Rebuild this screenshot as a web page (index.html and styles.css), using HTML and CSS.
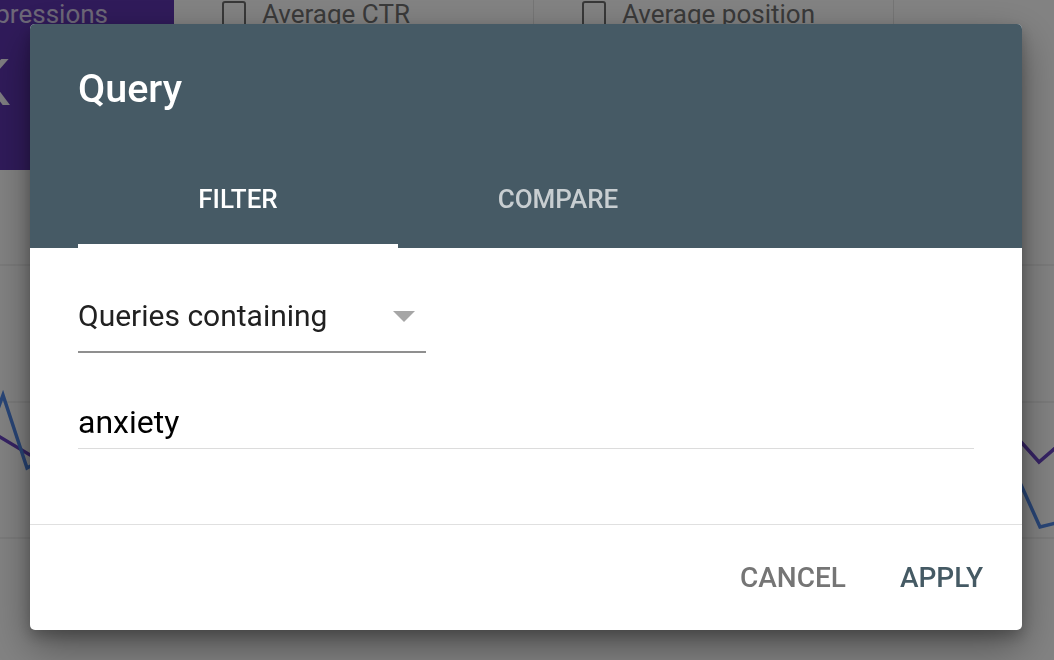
FILE: index.html
```html
<!DOCTYPE html>
<html lang="en">
<head>
<meta charset="utf-8">
<title>Query filter</title>
<link rel="stylesheet" href="styles.css">
</head>
<body>
<div class="page">
  <div class="metrics">
    <div class="metric metric-imp">
      <div class="imp-label"><span>Total impressions</span></div>
      <div class="imp-value"><span>2.1K</span></div>
    </div>
    <div class="metric metric-ctr">
      <div class="check"><span class="box"></span><span class="check-text">Average CTR</span></div>
    </div>
    <div class="metric metric-pos">
      <div class="check"><span class="box"></span><span class="check-text">Average position</span></div>
    </div>
    <div class="metric metric-rest"></div>
  </div>
  <div class="chart">
    <svg class="chart-svg" width="1054" height="490" viewBox="0 0 1054 490">
      <line x1="0" y1="95" x2="1054" y2="95" stroke="#ececec" stroke-width="1.5"/>
      <line x1="0" y1="232" x2="1054" y2="232" stroke="#ececec" stroke-width="1.5"/>
      <line x1="0" y1="368" x2="1054" y2="368" stroke="#ececec" stroke-width="1.5"/>
      <polyline points="-12,262 0,267 30,285 80,300" fill="none" stroke="#6a45c4" stroke-width="3.5"/>
      <polyline points="-6,250 3,225 27,298 60,280" fill="none" stroke="#5088e8" stroke-width="3.5"/>
      <polyline points="1000,250 1022,273 1039,292 1060,274" fill="none" stroke="#6a45c4" stroke-width="3.5"/>
      <polyline points="1000,270 1022,317 1040,357 1060,352" fill="none" stroke="#5088e8" stroke-width="3.5"/>
    </svg>
  </div>
</div>

<div class="scrim"></div>

<div class="dialog">
  <div class="dialog-header">
    <div class="dialog-title">Query</div>
    <div class="tabs">
      <div class="tab tab-active">FILTER</div>
      <div class="tab">COMPARE</div>
    </div>
  </div>
  <div class="dialog-body">
    <div class="select">
      <span class="select-text">Queries containing</span>
      <span class="select-arrow"></span>
    </div>
    <div class="text-field">anxiety</div>
  </div>
  <div class="dialog-footer">
    <span class="btn btn-cancel">CANCEL</span>
    <span class="btn btn-apply">APPLY</span>
  </div>
</div>
</body>
</html>
```

FILE: styles.css
```css
html, body {
  margin: 0;
  padding: 0;
  width: 1054px;
  height: 660px;
  overflow: hidden;
  background: #ffffff;
  font-family: Roboto, "Noto Sans", Arial, sans-serif;
}

.page {
  width: 1054px;
  height: 660px;
  background: #ffffff;
}

.metrics {
  display: flex;
  height: 170px;
}

.metric {
  box-sizing: border-box;
  height: 170px;
  background: #ffffff;
}

.metric-imp {
  width: 174px;
  background: #5e35b1;
  overflow: hidden;
  color: #ffffff;
}

.imp-label {
  display: flex;
  justify-content: flex-end;
  width: 108px;
  white-space: nowrap;
  font-size: 26px;
  line-height: 28px;
  color: rgba(255, 255, 255, 0.75);
}

.imp-value {
  display: flex;
  justify-content: flex-end;
  width: 10px;
  margin-top: 20px;
  white-space: nowrap;
  font-size: 64px;
  line-height: 72px;
  color: rgba(255, 255, 255, 0.95);
}

.metric-ctr {
  width: 359px;
  padding-left: 48px;
}

.metric-pos {
  width: 360px;
  border-left: 1px solid #e6e6e6;
  padding-left: 48px;
}

.metric-rest {
  flex: 1;
  border-left: 1px solid #e6e6e6;
}

.check {
  display: flex;
  align-items: flex-start;
  gap: 16px;
}

.box {
  box-sizing: border-box;
  width: 24px;
  height: 26px;
  margin-top: 1px;
  border: 2.5px solid #6e6e6e;
  border-radius: 3px;
}

.check-text {
  font-size: 26px;
  line-height: 28px;
  color: #717171;
}

.chart {
  height: 490px;
}

.chart-svg {
  display: block;
}

.scrim {
  position: fixed;
  inset: 0;
  background: rgba(0, 0, 0, 0.49);
}

.dialog {
  position: fixed;
  left: 30px;
  top: 24px;
  width: 992px;
  background: #ffffff;
  border-radius: 5px;
  overflow: hidden;
  box-shadow: 0 16px 40px rgba(0, 0, 0, 0.4), 0 6px 14px rgba(0, 0, 0, 0.22);
}

.dialog-header {
  background: #465a65;
  padding-top: 43px;
}

.dialog-title {
  padding-left: 48px;
  font-size: 39.5px;
  line-height: 44px;
  font-weight: 500;
  color: #ffffff;
}

.tabs {
  display: flex;
  margin-top: 41px;
  padding-left: 48px;
}

.tab {
  box-sizing: border-box;
  width: 320px;
  height: 96px;
  display: flex;
  align-items: center;
  justify-content: center;
  font-size: 26px;
  font-weight: 500;
  color: rgba(255, 255, 255, 0.7);
  border-bottom: 4px solid transparent;
  padding-top: 2px;
}

.tab-active {
  color: #ffffff;
  border-bottom-color: #ffffff;
}

.dialog-body {
  padding: 50px 48px 75px;
}

.select {
  width: 348px;
  display: flex;
  align-items: center;
  justify-content: space-between;
  padding-bottom: 17px;
  border-bottom: 2px solid #8f8f8f;
  box-sizing: border-box;
}

.select-text {
  font-size: 30px;
  line-height: 36px;
  color: #212121;
}

.select-arrow {
  width: 0;
  height: 0;
  margin-right: 11px;
  border-left: 11.5px solid transparent;
  border-right: 11.5px solid transparent;
  border-top: 11px solid #a6a6a6;
}

.text-field {
  margin-top: 51px;
  padding-bottom: 8px;
  border-bottom: 1px solid #dcdcdc;
  font-size: 32px;
  line-height: 36px;
  color: #000000;
}

.dialog-footer {
  height: 105px;
  border-top: 1px solid #e0e0e0;
  display: flex;
  align-items: center;
  justify-content: flex-end;
  gap: 54px;
  padding-right: 39px;
}

.btn {
  font-size: 28px;
  line-height: 32px;
  font-weight: 500;
}

.btn-cancel {
  color: #757575;
}

.btn-apply {
  color: #455a64;
}
```
